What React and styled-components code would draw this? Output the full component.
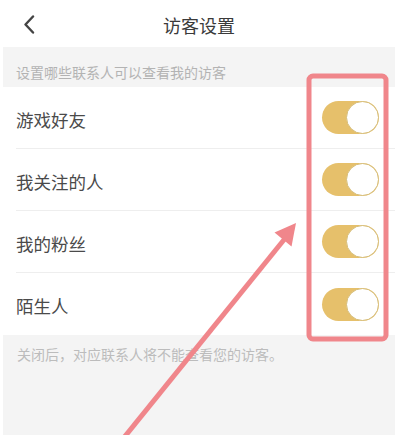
import React, { useState } from "react";
import styled, { createGlobalStyle } from "styled-components";

const GlobalStyle = createGlobalStyle`
  html, body {
    margin: 0;
    padding: 0;
    background: #ffffff;
  }
  body {
    font-family: "Noto Sans CJK SC", "Noto Sans", "Liberation Sans", sans-serif;
  }
`;

const contacts = ["游戏好友", "我关注的人", "我的粉丝", "陌生人"];

const App = () => {
    const [on, setOn] = useState(contacts.map(() => true));

    const flip = (i) => {
        setOn(on.map((v, j) => (j === i ? !v : v)));
    };

    return (
        <>
            <GlobalStyle />
            <Page>
                <Header>
                    <BackButton aria-label="返回">
                        <svg width="12" height="19" viewBox="0 0 12 19">
                            <path d="M10 1.5 L2.5 9.5 L10 17.5" fill="none" stroke="#444" strokeWidth="2.4" strokeLinecap="round" strokeLinejoin="round" />
                        </svg>
                    </BackButton>
                    <Title>访客设置</Title>
                    <span />
                </Header>
                <Note>设置哪些联系人可以查看我的访客</Note>
                <List>
                    {contacts.map((name, i) => (
                        <Row key={name}>
                            <Label>{name}</Label>
                            <Toggle $on={on[i]} onClick={() => flip(i)} aria-label={name}>
                                <Knob $on={on[i]} />
                            </Toggle>
                        </Row>
                    ))}
                </List>
                <Footer>关闭后，对应联系人将不能查看您的访客。</Footer>
                <Annotation width="400" height="435" viewBox="0 0 400 435">
                    <rect x="309" y="76" width="77" height="263" rx="4" fill="none" stroke="#f0868b" strokeWidth="5" />
                    <line x1="122" y1="440" x2="287" y2="236" stroke="#f0868b" strokeWidth="5" />
                    <polygon points="296,223 291.5,246.5 274.5,232.5" fill="#f0868b" />
                </Annotation>
            </Page>
        </>
    );
};

export default App;

const Page = styled.div`
    position: relative;
    width: 392px;
    height: 435px;
    margin-left: 3px;
    display: flex;
    flex-direction: column;
    background: #f4f4f4;
`;

const Header = styled.header`
    height: 47px;
    display: grid;
    grid-template-columns: 60px 1fr 60px;
    align-items: center;
    background: #ffffff;
`;

const BackButton = styled.button`
    display: flex;
    align-items: center;
    width: 40px;
    height: 40px;
    margin: 2px 0 0 20px;
    padding: 0;
    border: none;
    background: none;
    cursor: pointer;
`;

const Title = styled.h1`
    margin: 2px 0 0;
    text-align: center;
    font-size: 18px;
    font-weight: 400;
    color: #3a3a3a;
`;

const Note = styled.div`
    height: 40px;
    box-sizing: border-box;
    display: flex;
    align-items: flex-end;
    padding: 0 0 5px 13px;
    font-size: 14px;
    color: #b3b3b3;
`;

const List = styled.div`
    background: #ffffff;
`;

const Row = styled.div`
    height: 61px;
    display: flex;
    align-items: center;
    justify-content: space-between;
    margin-left: 13px;
    padding-right: 16px;
    border-bottom: 1px solid #eeeeee;
    &:last-child {
        border-bottom: none;
        height: 62px;
    }
`;

const Label = styled.span`
    margin-top: 3px;
    font-size: 17.5px;
    color: #4a4a4a;
`;

const Toggle = styled.button`
    position: relative;
    width: 57px;
    height: 33px;
    padding: 0;
    border: none;
    border-radius: 17px;
    background: ${(p) => (p.$on ? "#e6c06b" : "#e5e5e5")};
    cursor: pointer;
`;

const Knob = styled.span`
    position: absolute;
    top: 0;
    left: ${(p) => (p.$on ? "24px" : "0")};
    width: 31px;
    height: 31px;
    border-radius: 50%;
    border: 1px solid #d6bd78;
    background: #ffffff;
`;

const Footer = styled.div`
    flex: 1;
    padding: 9px 0 0 14px;
    font-size: 14px;
    color: #bcbcbc;
`;

const Annotation = styled.svg`
    position: absolute;
    top: 0;
    left: -3px;
    pointer-events: none;
`;
